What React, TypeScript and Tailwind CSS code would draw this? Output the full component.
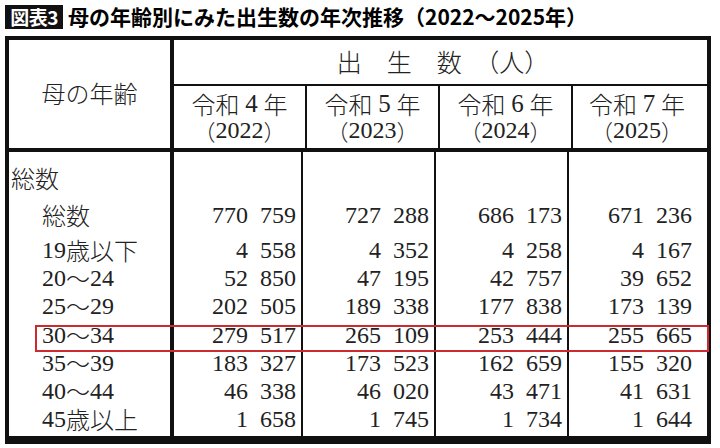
import React from "react";

type Row = { label: string; indent: boolean; vals: string[][]; mt: string };

const rows: Row[] = [
  { label: "総数", indent: false, vals: [], mt: "mt-[12px]" },
  { label: "総数", indent: true, vals: [["770", "759"], ["727", "288"], ["686", "173"], ["671", "236"]], mt: "mt-[9px]" },
  { label: "19歳以下", indent: true, vals: [["4", "558"], ["4", "352"], ["4", "258"], ["4", "167"]], mt: "mt-[7px]" },
  { label: "20～24", indent: true, vals: [["52", "850"], ["47", "195"], ["42", "757"], ["39", "652"]], mt: "" },
  { label: "25～29", indent: true, vals: [["202", "505"], ["189", "338"], ["177", "838"], ["173", "139"]], mt: "" },
  { label: "30～34", indent: true, vals: [["279", "517"], ["265", "109"], ["253", "444"], ["255", "665"]], mt: "mt-[1px]" },
  { label: "35～39", indent: true, vals: [["183", "327"], ["173", "523"], ["162", "659"], ["155", "320"]], mt: "" },
  { label: "40～44", indent: true, vals: [["46", "338"], ["46", "020"], ["43", "471"], ["41", "631"]], mt: "" },
  { label: "45歳以上", indent: true, vals: [["1", "658"], ["1", "745"], ["1", "734"], ["1", "644"]], mt: "" },
];

const years = [
  { n: "4", y: "2022" },
  { n: "5", y: "2023" },
  { n: "6", y: "2024" },
  { n: "7", y: "2025" },
];

const colW = ["w-[131px]", "w-[133px]", "w-[133px]", "w-[130px]"];
const colB = ["border-l-4", "border-l-2", "border-l-2", "border-l-2"];

function Label({ text }: { text: string }) {
  const parts = text.split(/(\d+)/).filter(Boolean);
  return (
    <>
      {parts.map((p, i) =>
        /^\d+$/.test(p) ? (
          <span key={i} className="font-[Liberation_Serif,serif] font-normal">{p}</span>
        ) : (
          <span key={i} className="font-[Noto_Sans_CJK_JP,sans-serif] font-light">{p}</span>
        )
      )}
    </>
  );
}

export default function App() {
  return (
    <div className="w-[720px] h-[448px] bg-white overflow-hidden relative text-[#222] font-[Liberation_Serif,Noto_Sans_CJK_JP,serif]">
      {/* Title */}
      <div className="flex items-center h-[36px] pl-[5px] pb-[6px] pt-[3px]">
        <div className="bg-[#111] text-white h-[24px] w-[58px] flex items-center justify-center font-[Noto_Sans_CJK_JP,sans-serif] font-bold text-[19px] leading-none tracking-[-0.5px]">
          図表3
        </div>
        <div className="ml-[5px] font-[Noto_Sans_CJK_JP,sans-serif] font-bold text-[21px] leading-none text-black">
          母の年齢別にみた出生数の年次推移（2022～2025年）
        </div>
      </div>

      {/* Table */}
      <div className="ml-[5px] w-[706px] border-4 border-b-[8px] border-[#111]">
        {/* Header */}
        <div className="flex h-[112px] border-b-4 border-[#111]">
          <div className="w-[161px] flex items-center justify-center text-[24px] font-[Noto_Sans_CJK_JP,sans-serif] font-light pb-[2px]">
            母の年齢
          </div>
          <div className="flex-1 flex flex-col border-l-4 border-[#111]">
            <div className="h-[46px] border-b-2 border-[#111] flex items-center justify-center pl-[5px] text-[25px] font-[Noto_Sans_CJK_JP,sans-serif] font-light whitespace-pre">
              出　生　数　（人）
            </div>
            <div className="flex flex-1">
              {years.map((y, i) => (
                <div
                  key={y.y}
                  className={`${colW[i]} ${i === 0 ? "" : "border-l-2"} border-[#111] flex flex-col items-center justify-center text-[24px] pb-[1px]`}
                >
                  <div className="flex items-center h-[26px] leading-[26px]">
                    <span className="font-[Noto_Sans_CJK_JP,sans-serif] font-light">令和</span>
                    <span className="w-[24px] text-center font-[Liberation_Serif,serif] text-[25px]">{y.n}</span>
                    <span className="font-[Noto_Sans_CJK_JP,sans-serif] font-light">年</span>
                  </div>
                  <div className="flex items-center h-[26px] leading-[26px]">
                    <span className="font-[Noto_Sans_CJK_JP,sans-serif] font-light text-[22px]">（</span>
                    <span className="font-[Liberation_Serif,serif]">{y.y}</span>
                    <span className="font-[Noto_Sans_CJK_JP,sans-serif] font-light text-[22px]">）</span>
                  </div>
                </div>
              ))}
            </div>
          </div>
        </div>

        {/* Body */}
        <div className="flex h-[284px]">
          <div className="w-[161px] flex flex-col">
            {rows.map((r, i) => (
              <div
                key={i}
                className={`${r.mt} h-[28px] flex items-center text-[24px] leading-none whitespace-nowrap ${r.indent ? "pl-[33px]" : "pl-[2px]"}`}
              >
                <Label text={r.label} />
              </div>
            ))}
          </div>
          {[0, 1, 2, 3].map((c) => (
            <div key={c} className={`${colW[c]} ${colB[c]} border-[#111] flex flex-col`}>
              {rows.map((r, i) => (
                <div
                  key={i}
                  className={`${r.mt} h-[28px] flex items-center justify-end pr-[5px] text-[24px] leading-none font-[Liberation_Serif,serif]`}
                >
                  {r.vals[c] ? (
                    <>
                      <span>{r.vals[c][0]}</span>
                      <span className="ml-[12px]">{r.vals[c][1]}</span>
                    </>
                  ) : null}
                </div>
              ))}
            </div>
          ))}
        </div>
      </div>

      {/* Red highlight box */}
      <div className="absolute left-[35px] top-[325px] w-[674px] h-[27px] border-2 border-[#cc2a2e] pointer-events-none" />
    </div>
  );
}
